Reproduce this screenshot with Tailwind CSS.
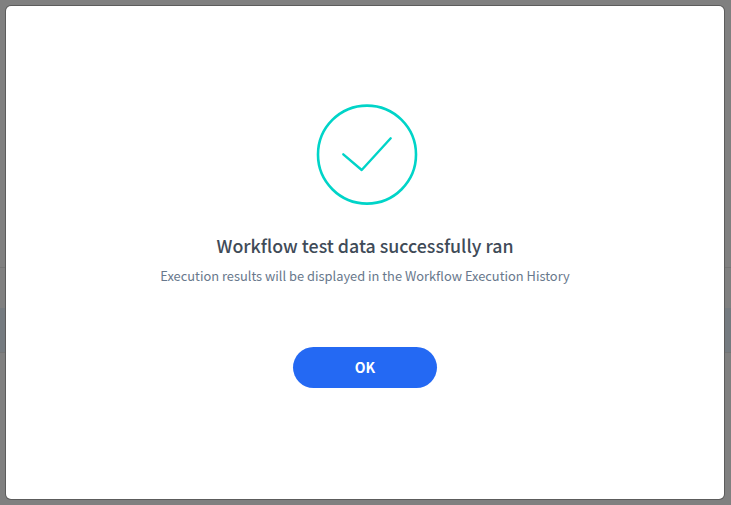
<!DOCTYPE html>
<html lang="en">
<head>
  <meta charset="UTF-8">
  <meta name="viewport" content="width=device-width, initial-scale=1">
  <title>Workflow test</title>
  <script src="https://cdn.jsdelivr.net/npm/@tailwindcss/browser@4"></script>
</head>
<body class="relative w-[731px] h-[505px] overflow-hidden bg-[#808080] font-['Noto_Sans_CJK_JP','Source_Sans_Pro',sans-serif]">

  <!-- page behind the overlay -->
  <div class="flex flex-col h-full">
    <div class="h-[268px] border-b border-[#757575]"></div>
    <div class="h-[40px]"></div>
    <div class="h-[44px] bg-[#757b80]"></div>
    <div class="flex-1 border-t border-[#757575]"></div>
  </div>

  <!-- modal -->
  <div class="absolute left-[6px] top-[6px] w-[718px] h-[493px] bg-white rounded-[5px] shadow-[0_0_0_1px_#5c5c5c] flex flex-col items-center pt-[98px]">
    <svg class="ml-[4px] w-[102px] h-[102px]" viewBox="0 0 102 102" fill="none" stroke="#00d4c8" stroke-linecap="round" stroke-linejoin="round">
      <circle cx="51" cy="50.6" r="49" stroke-width="2.6"/>
      <path d="M27.3 50.3 L45.7 66 L74.7 34.3" stroke-width="2.4"/>
    </svg>
    <h2 class="mt-[26px] text-[17.8px] leading-[26px] font-medium text-[#3f4b58]">Workflow test data successfully ran</h2>
    <p class="mt-[8px] text-[12.87px] leading-[20px] text-[#68788c]">Execution results will be displayed in the Workflow Execution History</p>
    <button class="mt-[61px] w-[144px] h-[41px] rounded-full bg-[#2469f3] text-white text-[14px] font-bold">OK</button>
  </div>

</body>
</html>
